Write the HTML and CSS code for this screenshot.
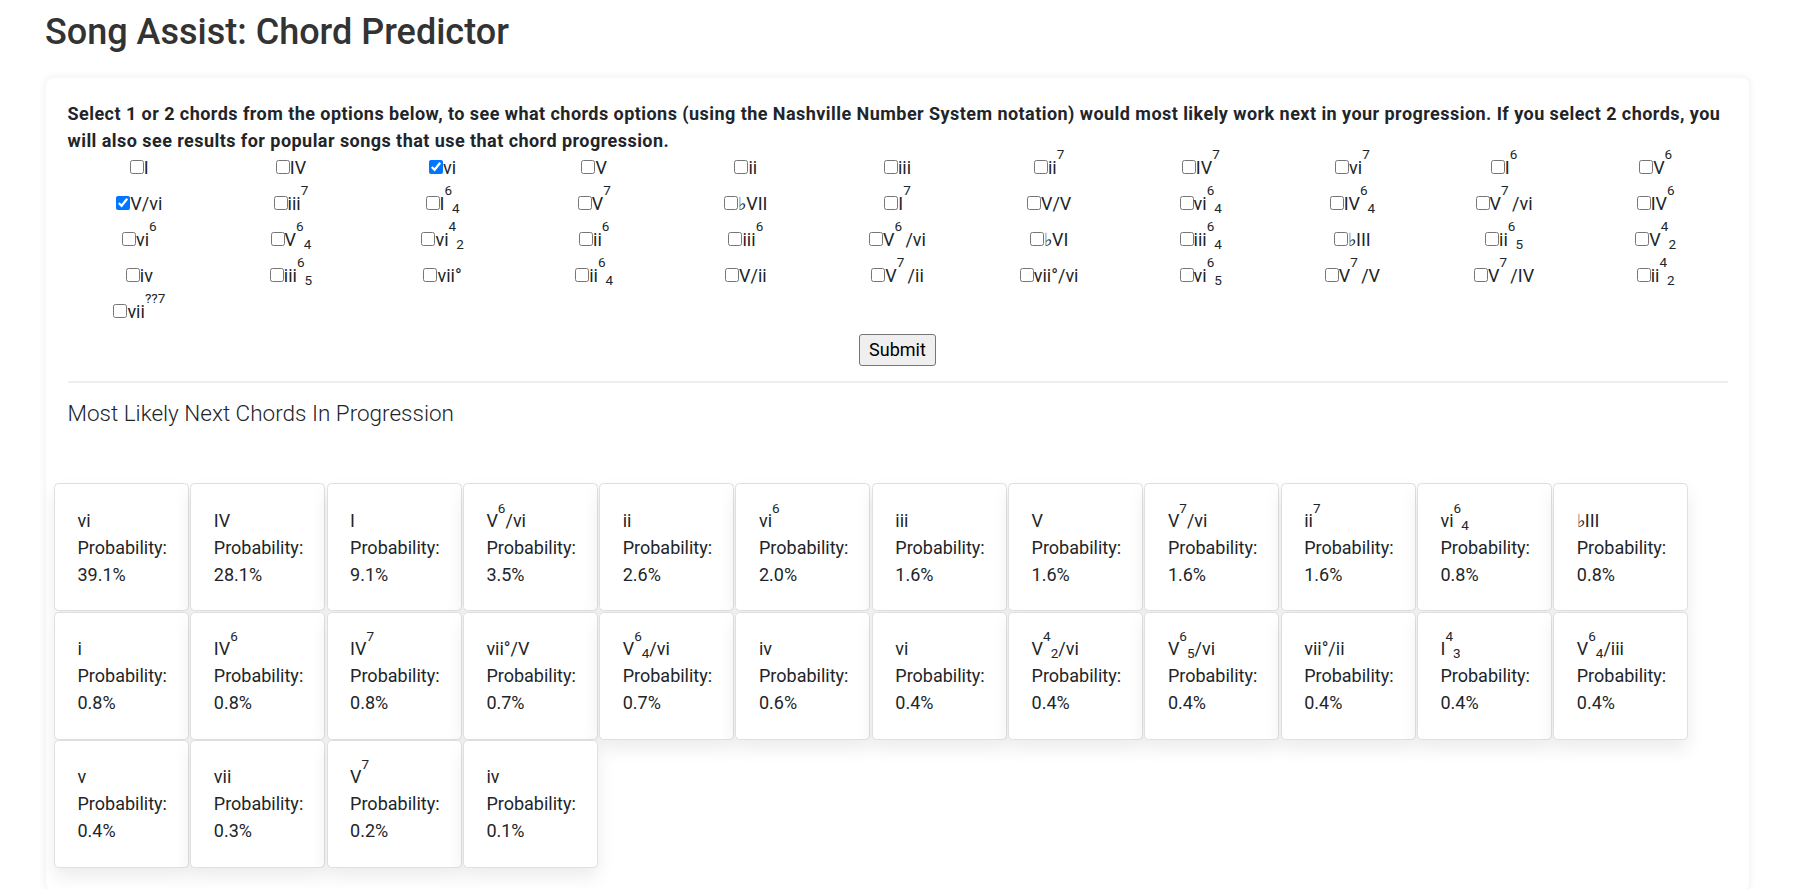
FILE: index.html
```html
<!DOCTYPE html>
<html lang="en">
<head>
<meta charset="utf-8">
<title>Song Assist: Chord Predictor</title>
<link rel="stylesheet" href="styles.css">
</head>
<body>
<div class="page">
  <h1 class="title">Song Assist: Chord Predictor</h1>
  <div class="panel">
    <form class="panel-body">
      <p class="intro">Select 1 or 2 chords from the options below, to see what chords options (using the Nashville Number System notation) would most likely work next in your progression. If you select 2 chords, you will also see results for popular songs that use that chord progression.</p>
      <div class="chord-grid">
        <label class="chord-option"><input type="checkbox">I</label>
        <label class="chord-option"><input type="checkbox">IV</label>
        <label class="chord-option"><input type="checkbox" checked>vi</label>
        <label class="chord-option"><input type="checkbox">V</label>
        <label class="chord-option"><input type="checkbox">ii</label>
        <label class="chord-option"><input type="checkbox">iii</label>
        <label class="chord-option"><input type="checkbox">ii<sup>7</sup></label>
        <label class="chord-option"><input type="checkbox">IV<sup>7</sup></label>
        <label class="chord-option"><input type="checkbox">vi<sup>7</sup></label>
        <label class="chord-option"><input type="checkbox">I<sup>6</sup></label>
        <label class="chord-option"><input type="checkbox">V<sup>6</sup></label>

        <label class="chord-option"><input type="checkbox" checked>V/vi</label>
        <label class="chord-option"><input type="checkbox">iii<sup>7</sup></label>
        <label class="chord-option"><input type="checkbox">I<sup>6</sup><sub>4</sub></label>
        <label class="chord-option"><input type="checkbox">V<sup>7</sup></label>
        <label class="chord-option"><input type="checkbox">♭VII</label>
        <label class="chord-option"><input type="checkbox">I<sup>7</sup></label>
        <label class="chord-option"><input type="checkbox">V/V</label>
        <label class="chord-option"><input type="checkbox">vi<sup>6</sup><sub>4</sub></label>
        <label class="chord-option"><input type="checkbox">IV<sup>6</sup><sub>4</sub></label>
        <label class="chord-option"><input type="checkbox">V<sup>7</sup><sub> </sub>/vi</label>
        <label class="chord-option"><input type="checkbox">IV<sup>6</sup></label>

        <label class="chord-option"><input type="checkbox">vi<sup>6</sup></label>
        <label class="chord-option"><input type="checkbox">V<sup>6</sup><sub>4</sub></label>
        <label class="chord-option"><input type="checkbox">vi<sup>4</sup><sub>2</sub></label>
        <label class="chord-option"><input type="checkbox">ii<sup>6</sup></label>
        <label class="chord-option"><input type="checkbox">iii<sup>6</sup></label>
        <label class="chord-option"><input type="checkbox">V<sup>6</sup><sub> </sub>/vi</label>
        <label class="chord-option"><input type="checkbox">♭VI</label>
        <label class="chord-option"><input type="checkbox">iii<sup>6</sup><sub>4</sub></label>
        <label class="chord-option"><input type="checkbox">♭III</label>
        <label class="chord-option"><input type="checkbox">ii<sup>6</sup><sub>5</sub></label>
        <label class="chord-option"><input type="checkbox">V<sup>4</sup><sub>2</sub></label>

        <label class="chord-option"><input type="checkbox">iv</label>
        <label class="chord-option"><input type="checkbox">iii<sup>6</sup><sub>5</sub></label>
        <label class="chord-option"><input type="checkbox">vii°</label>
        <label class="chord-option"><input type="checkbox">ii<sup>6</sup><sub>4</sub></label>
        <label class="chord-option"><input type="checkbox">V/ii</label>
        <label class="chord-option"><input type="checkbox">V<sup>7</sup><sub> </sub>/ii</label>
        <label class="chord-option"><input type="checkbox">vii°/vi</label>
        <label class="chord-option"><input type="checkbox">vi<sup>6</sup><sub>5</sub></label>
        <label class="chord-option"><input type="checkbox">V<sup>7</sup><sub> </sub>/V</label>
        <label class="chord-option"><input type="checkbox">V<sup>7</sup><sub> </sub>/IV</label>
        <label class="chord-option"><input type="checkbox">ii<sup>4</sup><sub>2</sub></label>

        <label class="chord-option"><input type="checkbox">vii<sup>??7</sup></label>
      </div>
      <div class="submit-row"><button type="button" class="submit">Submit</button></div>
      <hr class="divider">
      <p class="lead">Most Likely Next Chords In Progression</p>
      <div class="results">
        <div class="result-card"><div>vi</div><div>Probability:</div><div>39.1%</div></div>
        <div class="result-card"><div>IV</div><div>Probability:</div><div>28.1%</div></div>
        <div class="result-card"><div>I</div><div>Probability:</div><div>9.1%</div></div>
        <div class="result-card"><div>V<sup>6</sup>/vi</div><div>Probability:</div><div>3.5%</div></div>
        <div class="result-card"><div>ii</div><div>Probability:</div><div>2.6%</div></div>
        <div class="result-card"><div>vi<sup>6</sup></div><div>Probability:</div><div>2.0%</div></div>
        <div class="result-card"><div>iii</div><div>Probability:</div><div>1.6%</div></div>
        <div class="result-card"><div>V</div><div>Probability:</div><div>1.6%</div></div>
        <div class="result-card"><div>V<sup>7</sup>/vi</div><div>Probability:</div><div>1.6%</div></div>
        <div class="result-card"><div>ii<sup>7</sup></div><div>Probability:</div><div>1.6%</div></div>
        <div class="result-card"><div>vi<sup>6</sup><sub>4</sub></div><div>Probability:</div><div>0.8%</div></div>
        <div class="result-card"><div>♭III</div><div>Probability:</div><div>0.8%</div></div>

        <div class="result-card"><div>i</div><div>Probability:</div><div>0.8%</div></div>
        <div class="result-card"><div>IV<sup>6</sup></div><div>Probability:</div><div>0.8%</div></div>
        <div class="result-card"><div>IV<sup>7</sup></div><div>Probability:</div><div>0.8%</div></div>
        <div class="result-card"><div>vii°/V</div><div>Probability:</div><div>0.7%</div></div>
        <div class="result-card"><div>V<sup>6</sup><sub>4</sub>/vi</div><div>Probability:</div><div>0.7%</div></div>
        <div class="result-card"><div>iv</div><div>Probability:</div><div>0.6%</div></div>
        <div class="result-card"><div>vi</div><div>Probability:</div><div>0.4%</div></div>
        <div class="result-card"><div>V<sup>4</sup><sub>2</sub>/vi</div><div>Probability:</div><div>0.4%</div></div>
        <div class="result-card"><div>V<sup>6</sup><sub>5</sub>/vi</div><div>Probability:</div><div>0.4%</div></div>
        <div class="result-card"><div>vii°/ii</div><div>Probability:</div><div>0.4%</div></div>
        <div class="result-card"><div>I<sup>4</sup><sub>3</sub></div><div>Probability:</div><div>0.4%</div></div>
        <div class="result-card"><div>V<sup>6</sup><sub>4</sub>/iii</div><div>Probability:</div><div>0.4%</div></div>

        <div class="result-card"><div>v</div><div>Probability:</div><div>0.4%</div></div>
        <div class="result-card"><div>vii</div><div>Probability:</div><div>0.3%</div></div>
        <div class="result-card"><div>V<sup>7</sup></div><div>Probability:</div><div>0.2%</div></div>
        <div class="result-card"><div>iv</div><div>Probability:</div><div>0.1%</div></div>
      </div>
    </form>
  </div>
</div>
</body>
</html>
```

FILE: styles.css
```css
* { box-sizing: border-box; }

html, body {
  margin: 0;
  background: #fff;
}

body {
  font-family: "Segoe UI", Roboto, "Liberation Sans", sans-serif;
  font-size: 18px;
  line-height: 27px;
  color: #212529;
}

.page {
  padding: 0 47px 0 45px;
}

.title {
  margin: 11px 0 23px;
  font-size: 36px;
  line-height: 43px;
  font-weight: 500;
  color: #333;
}

.panel {
  background: #fff;
  border: 1px solid rgba(0, 0, 0, 0.03);
  border-radius: 8px;
  box-shadow: 0 0 8px rgba(0, 0, 0, 0.06);
}

.panel-body {
  padding: 21.5px 21.5px 22px;
}

.intro {
  margin: 0;
  font-weight: 700;
  letter-spacing: 0.45px;
}

.chord-grid {
  display: grid;
  grid-template-columns: repeat(11, 1fr);
  margin: 0 -4px;
  text-align: center;
}

.chord-option {
  display: block;
  height: 27px;
  margin-bottom: 9px;
  white-space: nowrap;
}

.chord-option input {
  width: 14px;
  height: 14px;
  margin: 0;
  vertical-align: baseline;
}

sup, sub {
  font-size: 75%;
  line-height: 0;
  position: relative;
  vertical-align: baseline;
}

sup { top: -1.05em; }
sub { bottom: -0.25em; }

.submit-row {
  text-align: center;
}

.submit {
  height: 32px;
  padding: 0 9px;
  font: inherit;
  line-height: 28px;
  color: #000;
  background: #efefef;
  border: 1px solid #767676;
  border-radius: 3px;
}

.divider {
  margin: 15px 0 0;
  border: 0;
  border-top: 2px solid #eeeeee;
}

.lead {
  margin: 14px 0 0;
  font-size: 22.5px;
  line-height: 33.75px;
  font-weight: 300;
}

.results {
  display: flex;
  flex-wrap: wrap;
  gap: 0.3px 1.3px;
  margin: 53px -13.5px 0;
}

.result-card {
  width: 135px;
  padding: 22.5px;
  border: 1px solid #dfdfdf;
  border-radius: 4.5px;
  background: #fff;
  box-shadow: 0 9px 18px rgba(0, 0, 0, 0.08);
  white-space: nowrap;
}
```
